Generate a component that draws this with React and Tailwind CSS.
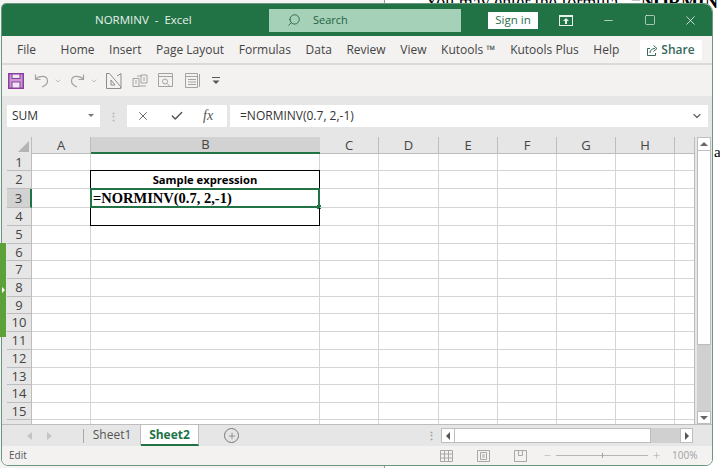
import { Search, X, Minus, Square, ChevronDown, Check, Plus } from 'lucide-react';

const tabs = ['File', 'Home', 'Insert', 'Page Layout', 'Formulas', 'Data', 'Review', 'View', 'Kutools ™', 'Kutools Plus', 'Help'];

const columns = [
  { name: 'A', w: 'w-[59px]' },
  { name: 'B', w: 'w-[229px]' },
  { name: 'C', w: 'w-[59px]' },
  { name: 'D', w: 'w-[60px]' },
  { name: 'E', w: 'w-[59px]' },
  { name: 'F', w: 'w-[59px]' },
  { name: 'G', w: 'w-[59px]' },
  { name: 'H', w: 'w-[59px]' },
];

const rows = [
  { n: 1, h: 'h-[17px]' },
  { n: 2, h: 'h-[18px]' },
  { n: 3, h: 'h-[19px]' },
  { n: 4, h: 'h-[18px]' },
  { n: 5, h: 'h-[18px]' },
  { n: 6, h: 'h-[17px]' },
  { n: 7, h: 'h-[18px]' },
  { n: 8, h: 'h-[18px]' },
  { n: 9, h: 'h-[17px]' },
  { n: 10, h: 'h-[18px]' },
  { n: 11, h: 'h-[18px]' },
  { n: 12, h: 'h-[18px]' },
  { n: 13, h: 'h-[17px]' },
  { n: 14, h: 'h-[18px]' },
  { n: 15, h: 'h-[17px]' },
];

// the black box round B2:B4 sits one pixel up and left, on the neighbours' grid lines
const cellClass = (row, col) => {
  if (col !== 'B') return 'border-r border-b border-[#d4d4d4]';
  if (row === 2) return 'border-r border-b border-black shadow-[-1px_-1px_0_#000,0_-1px_0_#000,-1px_0_0_#000]';
  if (row === 3) return 'border-r border-black shadow-[-1px_0_0_#000]';
  if (row === 4) return 'border-r border-b border-black shadow-[-1px_0_0_#000]';
  return 'border-r border-b border-[#d4d4d4]';
};

function GridRow({ n, h }) {
  return (
    <div className={`flex shrink-0 ${h}`}>
      <div
        className={`w-[25px] shrink-0 flex items-center justify-center text-[13px] leading-none text-[#444] border-b border-[#bdbdbd] ${
          n === 3 ? 'bg-[#d2d2d2] border-r-2 border-r-[#217346]' : 'bg-[#e6e6e6] border-r border-r-[#bdbdbd]'
        }`}
      >
        {n}
      </div>
      {columns.map((c) => (
        <div key={c.name} className={`${c.w} shrink-0 relative ${cellClass(n, c.name)}`}>
          {n === 2 && c.name === 'B' && (
            <div className="h-full flex items-center justify-center text-[11.200px] leading-none font-bold text-black">Sample expression</div>
          )}
          {n === 3 && c.name === 'B' && (
            <>
              <div className="absolute -left-px -right-px -top-px bottom-0 border-2 border-[#217346]" />
              <div className="relative h-full flex items-center pl-[2px] text-[14.500px] leading-none font-bold text-black font-['Liberation_Serif',serif]">
                =NORMINV(0.7, 2,-1)
              </div>
              <div className="absolute -right-[2px] -bottom-[1px] w-[4px] h-[4px] bg-[#217346]" />
            </>
          )}
        </div>
      ))}
      <div className="flex-1 border-b border-[#d4d4d4]" />
    </div>
  );
}

function StatusIcons() {
  return (
    <div className="flex items-center text-[#a8a8a8]">
      <svg width="13" height="12" viewBox="0 0 13 12" fill="none" stroke="currentColor" className="mr-[24px]">
        <path d="M.5.5h12v11H.5zM.5 4h12M.5 8h12M4.500 .5v11M8.500 .5v11" />
      </svg>
      <svg width="13" height="12" viewBox="0 0 13 12" fill="none" stroke="currentColor" className="mr-[24px]">
        <path d="M.5.5h12v11H.5zM3.500 2.500h6v7h-6zM5 5h3M5 7h3" />
      </svg>
      <svg width="13" height="12" viewBox="0 0 13 12" fill="none" stroke="currentColor" className="mr-[16px]">
        <path d="M.5.5h12v11H.5zM4.500 .5v5h4v-5" />
      </svg>
      <Minus size={9} strokeWidth={1.500} className="mr-[4px]" />
      <div className="relative w-[92px] h-px bg-[#b5b5b5] mr-[4px]">
        <div className="absolute left-1/2 -top-[2px] w-px h-[5px] bg-[#a0a0a0]" />
      </div>
      <Plus size={9} strokeWidth={1.500} className="mr-[11px]" />
      <span className="text-[10px] text-[#a0a0a0] w-[24px] whitespace-nowrap">100%</span>
    </div>
  );
}

export default function App() {
  return (
    <div className="relative w-[720px] h-[468px] overflow-hidden bg-white font-['Open_Sans','Noto_Sans',sans-serif]">
      {/* document behind the window */}
      <div className="absolute left-0 top-0 w-[385px] h-full bg-[#f3f3f3] border-r border-[#9a9a9a]" />
      <div className="absolute left-[425px] -top-[11px] whitespace-nowrap text-[18px] text-black font-['Liberation_Serif',serif]">
        You may enter the formula “<b>=NORMINV</b>
      </div>
      <div className="absolute left-[714px] top-[141px] text-[15px] text-black font-['Liberation_Serif',serif]">a</div>

      {/* excel window */}
      <div className="absolute left-[1px] top-[3px] w-[712px] h-[463px] flex flex-col bg-[#f3f2f1] border border-[#6b9780] rounded-tr-[9px] rounded-tl-[5px] rounded-b-[7px] overflow-hidden">
        {/* title bar */}
        <div className="h-[32px] shrink-0 bg-[#217346] flex items-center text-white">
          <div className="w-[93px] shrink-0" />
          <span className="w-[174px] shrink-0 text-[11.500px] text-[#e8f1ec] whitespace-nowrap">NORMINV &nbsp;-&nbsp; Excel</span>
          <div className="w-[192px] h-[23px] shrink-0 bg-[#a5d1b9] flex items-center text-[#25613f]">
            <Search size={14} strokeWidth={1.500} className="ml-[18px] -scale-x-100" />
            <span className="ml-[12px] text-[11px]">Search</span>
          </div>
          <div className="ml-[27px] w-[50px] h-[17px] shrink-0 bg-white flex items-center justify-center text-[11.500px] text-[#2b6e4b]">Sign in</div>
          <svg width="14" height="11" viewBox="0 0 14 11" className="ml-[21px] shrink-0">
            <rect x="0" y="0" width="14" height="11" fill="#e8f1ec" />
            <rect x="1" y="2" width="12" height="8" fill="#217346" />
            <path d="M7 3l3 3H8v3H6V6H4z" fill="#e8f1ec" />
          </svg>
          <Minus size={13} strokeWidth={1.200} className="ml-[29px] shrink-0" />
          <Square size={12} strokeWidth={1.200} className="ml-[29px] shrink-0" />
          <X size={15} strokeWidth={1.200} className="ml-[27px] shrink-0" />
        </div>

        {/* ribbon tabs */}
        <div className="h-[29px] shrink-0 flex items-center gap-[14.600px] pt-[1px] pl-[15px] pr-[10px] border-b-2 border-[#dbdad9] text-[12px] text-[#444]">
          {tabs.map((t, i) => (
            <span key={t} className={`shrink-0 whitespace-nowrap ${i === 0 ? 'mr-[10px]' : ''}`}>{t}</span>
          ))}
          <div className="ml-auto w-[62px] h-[20px] shrink-0 bg-white rounded-[2px] flex items-center justify-center gap-[3px] text-[12px] font-semibold text-[#36695a]">
            <svg width="11" height="11" viewBox="0 0 11 11" fill="none" stroke="currentColor">
              <path d="M3 3.500H.5v7h8V8M3 8c0-3 2-4.500 5-4.500M6.500 .5l3.500 3-3.500 3" />
            </svg>
            Share
          </div>
        </div>

        {/* quick access toolbar */}
        <div className="h-[31px] shrink-0 flex items-center pl-[6px] text-[#a3a3a3]">
          <svg width="16" height="16" viewBox="0 0 16 16" className="mr-[10px] shrink-0">
            <rect x=".75" y=".75" width="14.500" height="14.500" fill="#c79ad2" stroke="#8a3f9c" strokeWidth="1.500" />
            <rect x="4" y="1" width="8" height="4.500" fill="#f1e6f3" stroke="#8a3f9c" />
            <rect x="4" y="9" width="8" height="6" fill="#f1e6f3" stroke="#8a3f9c" />
          </svg>
          <svg width="15" height="15" viewBox="0 0 15 15" fill="none" stroke="#a3a3a3" strokeWidth="1.200" className="mr-[5px] shrink-0">
            <path d="M1.500 1.500v5h5M1.500 6.500C5 2.500 13 2 13.500 7.500 13.800 11 10.500 13 8 14" />
          </svg>
          <ChevronDown size={8} className="mr-[8px] shrink-0" />
          <svg width="15" height="15" viewBox="0 0 15 15" fill="none" stroke="#a3a3a3" strokeWidth="1.200" className="mr-[5px] shrink-0">
            <path d="M13.500 1.500v5h-5M13.500 6.500C10 2.500 2 2 1.500 7.500 1.200 11 4.500 13 7 14" />
          </svg>
          <ChevronDown size={8} className="mr-[8px] shrink-0" />
          <svg width="16" height="16" viewBox="0 0 16 16" fill="none" stroke="#8d8d8d" className="mr-[10px] shrink-0">
            <path d="M.5 15.500V.5h3l11 13v2zM15 .5v15M11 3l4-2.500M5 12h4L5 7z" />
          </svg>
          <svg width="16" height="14" viewBox="0 0 16 14" fill="none" stroke="#a3a3a3" className="mr-[10px] shrink-0">
            <path d="M1 4.500h6v8H1zM9 1h6v8H9zM5 2h5M3 7h2M3 9h2M11 4h2M11 6h2M7 12h7" />
          </svg>
          <svg width="16" height="15" viewBox="0 0 16 15" fill="none" stroke="#a3a3a3" className="mr-[11px] shrink-0">
            <path d="M.5.5h14v13H.5zM.5 3.500h14" />
            <circle cx="7" cy="8.500" r="2.500" />
            <path d="M9 10.500l3 3" />
          </svg>
          <svg width="15" height="15" viewBox="0 0 15 15" fill="none" stroke="#a3a3a3" className="mr-[12px] shrink-0">
            <path d="M.5.5h12v14H.5zM.5 3.500h12M3 6.500h8M3 9h8M3 11.500h8M14.500 1v13" />
          </svg>
          <svg width="8" height="8" viewBox="0 0 8 8" className="text-[#555] shrink-0">
            <path d="M0 .5h8" stroke="currentColor" />
            <path d="M.5 3.500h7L4 7z" fill="currentColor" />
          </svg>
        </div>

        {/* formula bar */}
        <div className="h-[41px] shrink-0 bg-[#e6e6e6] pt-[9px] pl-[5px] pr-[4px] flex items-start">
          <div className="w-[93px] h-[22px] bg-white flex items-center justify-between pl-[5px] pr-[6px] text-[12px] text-[#333]">
            SUM
            <svg width="6" height="4" viewBox="0 0 6 4"><path d="M0 0h6L3 3z" fill="#777" /></svg>
          </div>
          <div className="w-[27px] h-[22px] flex items-center justify-center text-[#b0b0b0] text-[11px] font-bold leading-none">⋮</div>
          <div className="w-[100px] h-[22px] bg-white flex items-center text-[#555]">
            <X size={14} strokeWidth={1.500} className="ml-[9px]" />
            <Check size={14} strokeWidth={2.500} className="ml-[20px]" />
            <span className="ml-[19px] text-[14px] italic leading-none font-['Liberation_Serif',serif]">fx</span>
          </div>
          <div className="ml-[3px] flex-1 h-[22px] bg-white flex items-center justify-between pl-[10px] pr-[5px] text-[12px] text-[#333]">
            =NORMINV(0.7, 2,-1)
            <ChevronDown size={12} strokeWidth={2.500} className="text-[#666]" />
          </div>
        </div>

        {/* sheet area */}
        <div className="h-[287px] shrink-0 flex bg-[#e6e6e6] pl-[5px] pr-[1px]">
          <div className="w-[688px] shrink-0 flex flex-col bg-white overflow-hidden border-r border-[#bdbdbd]">
            {/* column headers */}
            <div className="flex h-[17px] shrink-0 bg-[#e6e6e6]">
              <div className="w-[25px] shrink-0 border-r border-[#bdbdbd] relative overflow-hidden">
                <div className="absolute right-[2px] bottom-[2px] w-0 h-0 border-l-[11px] border-l-transparent border-b-[11px] border-b-[#b4b4b4]" />
              </div>
              {columns.map((c) => (
                <div
                  key={c.name}
                  className={`${c.w} shrink-0 flex items-center justify-center text-[13px] leading-none text-[#444] ${
                    c.name === 'B' ? 'bg-[#d2d2d2] border-b-2 border-[#217346]' : 'border-r border-b border-[#bdbdbd]'
                  }`}
                >
                  {c.name}
                </div>
              ))}
              <div className="flex-1 border-b border-[#bdbdbd]" />
            </div>
            {rows.map((r) => <GridRow key={r.n} n={r.n} h={r.h} />)}
            <div className="flex flex-1">
              <div className="w-[25px] shrink-0 bg-[#e6e6e6] border-r border-[#bdbdbd]" />
              {columns.map((c) => <div key={c.name} className={`${c.w} shrink-0 border-r border-[#d4d4d4]`} />)}
            </div>
          </div>
          {/* vertical scrollbar */}
          <div className="flex-1 flex flex-col items-end bg-[#e6e6e6]">
            <div className="w-[14px] h-[14px] shrink-0 bg-white border border-[#bdbdbd] flex items-center justify-center">
              <svg width="8" height="4" viewBox="0 0 8 4"><path d="M4 0l4 4H0z" fill="#666" /></svg>
            </div>
            <div className="w-[14px] h-[194px] shrink-0 bg-white border-x border-b border-[#bdbdbd]" />
            <div className="w-[14px] flex-1 bg-[#d0d0d0]" />
            <div className="w-[14px] h-[13px] shrink-0 bg-white border border-[#bdbdbd] flex items-center justify-center">
              <svg width="8" height="4" viewBox="0 0 8 4"><path d="M0 0h8L4 4z" fill="#666" /></svg>
            </div>
          </div>
        </div>

        {/* sheet tabs */}
        <div className="h-[22px] shrink-0 bg-[#e6e6e6] flex items-start pl-[5px] border-t border-[#bdbdbd]">
          <div className="w-[77px] h-[21px] shrink-0 flex items-center pl-[20px] gap-[15px] relative">
            <svg width="5" height="8" viewBox="0 0 5 8"><path d="M5 0v8L0 4z" fill="#c4c4c4" /></svg>
            <svg width="5" height="8" viewBox="0 0 5 8"><path d="M0 0v8l5-4z" fill="#c4c4c4" /></svg>
            <div className="absolute right-0 top-[4px] w-px h-[14px] bg-[#a8a8a8]" />
          </div>
          <div className="w-[57px] h-[20px] shrink-0 flex items-center justify-center text-[12px] text-[#555] border-r border-[#bdbdbd]">Sheet1</div>
          <div className="w-[58px] h-[21px] shrink-0 bg-white flex items-center justify-center text-[12px] font-bold text-[#217346] border-b-2 border-[#217346] border-r border-r-[#bdbdbd]">Sheet2</div>
          <div className="ml-[25px] mt-[3px] w-[15px] h-[15px] shrink-0 rounded-full border border-[#777] flex items-center justify-center text-[#666]">
            <Plus size={10} strokeWidth={1.500} />
          </div>
          <div className="ml-[190px] mt-[3px] w-[5px] h-[14px] shrink-0 flex items-center justify-center text-[#999] text-[11px] font-bold leading-none">⋮</div>
          <div className="ml-[7px] mt-[3px] w-[252px] h-[15px] shrink-0 flex bg-[#d0d0d0]">
            <div className="w-[14px] bg-white flex items-center justify-center border border-[#bdbdbd]">
              <svg width="4" height="8" viewBox="0 0 4 8"><path d="M4 0v8L0 4z" fill="#555" /></svg>
            </div>
            <div className="w-[196px] bg-white border-y border-r border-[#bdbdbd]" />
            <div className="flex-1" />
            <div className="w-[13px] bg-white flex items-center justify-center border border-[#bdbdbd]">
              <svg width="4" height="8" viewBox="0 0 4 8"><path d="M0 0v8l4-4z" fill="#555" /></svg>
            </div>
          </div>
        </div>

        {/* status bar */}
        <div className="h-[19px] shrink-0 bg-[#f3f2f1] flex items-center justify-between pl-[7px] pr-[16px]">
          <span className="text-[10px] text-[#555]">Edit</span>
          <StatusIcons />
        </div>
      </div>

      {/* collapsed side panel handle */}
      <div className="absolute left-0 top-[243px] w-[6px] h-[94px] bg-[#5da13a] flex items-center">
        <div className="w-0 h-0 border-y-[3px] border-y-transparent border-l-[3px] border-l-white ml-[2px]" />
      </div>
    </div>
  );
}
